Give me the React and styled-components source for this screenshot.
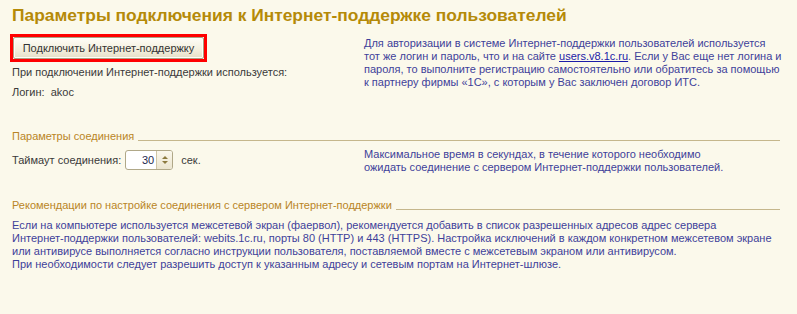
import React from 'react';
import styled, { createGlobalStyle } from 'styled-components';

const GlobalStyle = createGlobalStyle`
	html, body {
		margin: 0;
		padding: 0;
		background: #fbf9eb;
	}
	body {
		font-family: 'Liberation Sans', Arial, sans-serif;
		font-size: 11px;
		color: #3a3a3a;
	}
`;

const Page = styled.div`
	width: 797px;
	height: 314px;
	box-sizing: border-box;
	padding: 4px 0 0 12px;
	background: #fbf9eb;
	overflow: hidden;
`;

const Title = styled.h1`
	margin: 0;
	font-size: 17.4px;
	line-height: 22px;
	font-weight: bold;
	color: #b58a08;
`;

const Row = styled.div`
	display: grid;
	grid-template-columns: 352px 416px;
	align-items: start;
	margin-top: ${(p) => p.$top || 0}px;
`;

const Column = styled.div`
	display: flex;
	flex-direction: column;
	padding-top: ${(p) => p.$pad || 0}px;
`;

const RedFrame = styled.div`
	align-self: flex-start;
	margin-left: -2px;
	border: 3px solid #ff0000;
	padding: 0;
	line-height: 0;
`;

const Button = styled.button`
	width: 191px;
	height: 22px;
	padding: 0;
	border: 1px solid #a9a184;
	border-radius: 2px;
	background: linear-gradient(#fefdf7, #f3efdd 60%, #e6e0c8);
	box-shadow: inset 0 0 0 1px #fffef9;
	font-family: 'Liberation Sans', Arial, sans-serif;
	font-size: 11px;
	color: #333;
	line-height: 20px;
`;

const Text = styled.div`
	line-height: 13px;
	margin-top: ${(p) => p.$top || 0}px;
	white-space: pre;
`;

const Hint = styled.div`
	line-height: 13px;
	color: #3e419a;
	white-space: nowrap;
	margin-top: ${(p) => p.$top || 0}px;
`;

const Link = styled.a`
	color: #1b1ba8;
	text-decoration: underline;
`;

const Section = styled.div`
	display: flex;
	width: 768px;
	margin-top: ${(p) => p.$top}px;
`;

const SectionLabel = styled.span`
	line-height: 13px;
	color: #b98526;
`;

const SectionLine = styled.div`
	flex: 1;
	height: 1px;
	margin: 10px 0 0 4px;
	background: #c5b78c;
`;

const Field = styled.div`
	display: flex;
	align-items: center;
	height: 20px;
`;

const Spinner = styled.div`
	display: flex;
	width: 48px;
	height: 20px;
	box-sizing: border-box;
	margin: 0 8px 0 4px;
	border: 1px solid #b0a888;
	border-radius: 3px;
	background: #fff;
	overflow: hidden;
`;

const SpinValue = styled.span`
	flex: 1;
	text-align: right;
	padding-right: 2px;
	line-height: 18px;
	color: #1d2950;
`;

const SpinButtons = styled.div`
	width: 15px;
	display: flex;
	flex-direction: column;
	align-items: center;
	justify-content: center;
	gap: 2px;
	border-left: 1px solid #cfc6a6;
	background: linear-gradient(#fbf8ec, #ebe5cf);
`;

const Arrow = styled.span`
	width: 0;
	height: 0;
	border-left: 3px solid transparent;
	border-right: 3px solid transparent;
	${(p) => (p.$down ? 'border-top' : 'border-bottom')}: 3px solid #8c7a3e;
`;

const Paragraph = styled.div`
	margin-top: 7px;
	line-height: 13px;
	color: #3e419a;
	white-space: nowrap;
`;

const App = () => (
	<Page>
		<GlobalStyle />
		<Title>Параметры подключения к Интернет-поддержке пользователей</Title>
		<Row $top={8}>
			<Column>
				<RedFrame>
					<Button type="button">Подключить Интернет-поддержку</Button>
				</RedFrame>
				<Text $top={4}>При подключении Интернет-поддержки используется:</Text>
				<Text $top={7}>{'Логин:  akoc'}</Text>
			</Column>
			<Hint $top={3}>
				Для авторизации в системе Интернет-поддержки пользователей используется
				<br />
				тот же логин и пароль, что и на сайте <Link href="#">users.v8.1c.ru</Link>. Если у Вас еще нет логина и
				<br />
				пароля, то выполните регистрацию самостоятельно или обратитесь за помощью
				<br />к партнеру фирмы «1С», с которым у Вас заключен договор ИТС.
			</Hint>
		</Row>
		<Section $top={31}>
			<SectionLabel>Параметры соединения</SectionLabel>
			<SectionLine />
		</Section>
		<Row $top={5}>
			<Column $pad={2}>
				<Field>
					<span>Таймаут соединения:</span>
					<Spinner>
						<SpinValue>30</SpinValue>
						<SpinButtons>
							<Arrow />
							<Arrow $down />
						</SpinButtons>
					</Spinner>
					<span>сек.</span>
				</Field>
			</Column>
			<Hint>
				Максимальное время в секундах, в течение которого необходимо
				<br />
				ожидать соединение с сервером Интернет-поддержки пользователей.
			</Hint>
		</Row>
		<Section $top={25}>
			<SectionLabel>Рекомендации по настройке соединения с сервером Интернет-поддержки</SectionLabel>
			<SectionLine />
		</Section>
		<Paragraph>
			Если на компьютере используется межсетевой экран (фаервол), рекомендуется добавить в список разрешенных адресов адрес сервера
			<br />
			Интернет-поддержки пользователей: webits.1c.ru, порты 80 (HTTP) и 443 (HTTPS). Настройка исключений в каждом конкретном межсетевом экране
			<br />
			или антивирусе выполняется согласно инструкции пользователя, поставляемой вместе с межсетевым экраном или антивирусом.
			<br />
			При необходимости следует разрешить доступ к указанным адресу и сетевым портам на Интернет-шлюзе.
		</Paragraph>
	</Page>
);

export default App;
